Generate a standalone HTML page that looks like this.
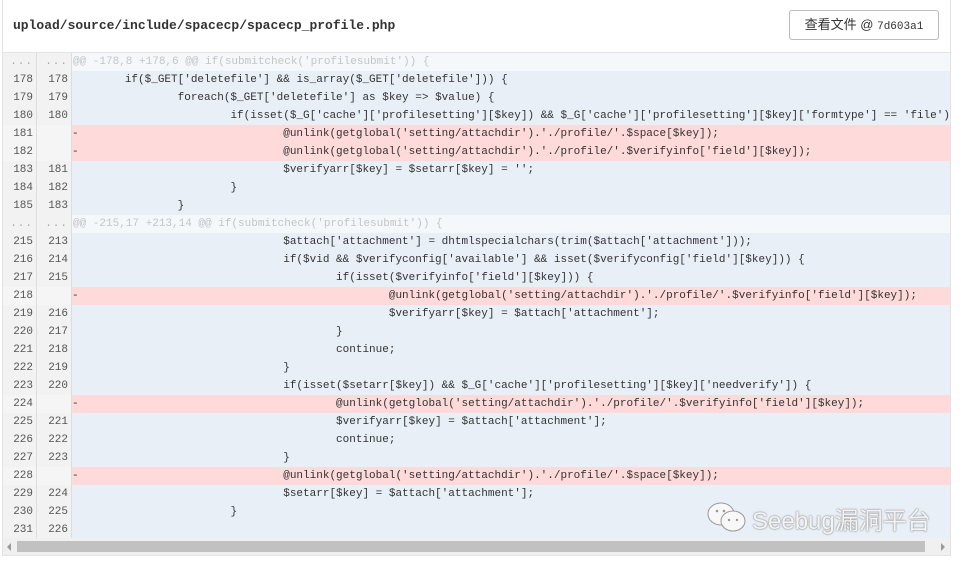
<!DOCTYPE html>
<html><head><meta charset="utf-8"><style>
body{margin:0;background:#fff;width:964px;height:562px;overflow:hidden;font-family:"Liberation Mono",monospace;}
.box{position:absolute;left:2px;top:0;width:949px;height:556px;border:1px solid #e3e3e3;border-top:none;box-sizing:border-box;overflow:hidden}
.hdr{height:52px;border-bottom:1px solid #e3e3e3;background:#fff;position:relative}
.hdr .p{position:absolute;left:10px;top:18px;font-size:13px;font-weight:bold;color:#333}
.btn{position:absolute;left:786px;top:10px;width:150px;height:30px;border:1px solid #bbb;border-radius:3px;box-sizing:border-box;font-family:"Liberation Sans","Noto Sans CJK SC",sans-serif;font-size:13px;color:#333;line-height:28px;text-align:center}
.btn span{font-family:"Liberation Mono",monospace;font-size:11px}
.r{height:18px;line-height:18px;font-size:11px;display:flex;white-space:pre;color:#333}
.n{width:34px;flex:none;text-align:right;padding-right:3px;box-sizing:border-box;background:#f2f2f2;border-right:1px solid #ddd;color:#555}
.n2{width:35px}
.c{flex:1;padding-left:0;background:#e8eff7;tab-size:8}
.d .c{background:#ffdada}
.d .n{background:#f5f5f5}
.h .c{background:#f5f8fb;color:#c4c4c4;padding-left:1px}
.h .n{color:#aaa;letter-spacing:1px}
.sb{position:absolute;left:0;top:538px;width:947px;height:17px;background:#f0f0f0}
.th{position:absolute;left:14px;top:3px;width:908px;height:11px;background:#c1c1c1}
.ar{position:absolute;top:5px;width:0;height:0;border-top:4px solid transparent;border-bottom:4px solid transparent}
.wm{position:absolute;left:752px;top:501px;font-family:"Liberation Sans","Noto Sans CJK SC",sans-serif;font-size:24px;color:#f4f4f4;text-shadow:0 0 1px #777,0 0 2px #999}
</style></head><body>
<div class="box">
<div class="hdr"><div class="p">upload/source/include/spacecp/spacecp_profile.php</div><div class="btn">查看文件 @ <span>7d603a1</span></div></div>
<div class="r h"><div class="n">...</div><div class="n n2">...</div><div class="c">@@ -178,8 +178,6 @@ if(submitcheck('profilesubmit')) {</div></div>
<div class="r"><div class="n">178</div><div class="n n2">178</div><div class="c"> 	if($_GET['deletefile'] &amp;&amp; is_array($_GET['deletefile'])) {</div></div>
<div class="r"><div class="n">179</div><div class="n n2">179</div><div class="c"> 		foreach($_GET['deletefile'] as $key =&gt; $value) {</div></div>
<div class="r"><div class="n">180</div><div class="n n2">180</div><div class="c"> 			if(isset($_G['cache']['profilesetting'][$key]) &amp;&amp; $_G['cache']['profilesetting'][$key]['formtype'] == 'file') {</div></div>
<div class="r d"><div class="n">181</div><div class="n n2"></div><div class="c">-				@unlink(getglobal('setting/attachdir').'./profile/'.$space[$key]);</div></div>
<div class="r d"><div class="n">182</div><div class="n n2"></div><div class="c">-				@unlink(getglobal('setting/attachdir').'./profile/'.$verifyinfo['field'][$key]);</div></div>
<div class="r"><div class="n">183</div><div class="n n2">181</div><div class="c"> 				$verifyarr[$key] = $setarr[$key] = '';</div></div>
<div class="r"><div class="n">184</div><div class="n n2">182</div><div class="c"> 			}</div></div>
<div class="r"><div class="n">185</div><div class="n n2">183</div><div class="c"> 		}</div></div>
<div class="r h"><div class="n">...</div><div class="n n2">...</div><div class="c">@@ -215,17 +213,14 @@ if(submitcheck('profilesubmit')) {</div></div>
<div class="r"><div class="n">215</div><div class="n n2">213</div><div class="c"> 				$attach['attachment'] = dhtmlspecialchars(trim($attach['attachment']));</div></div>
<div class="r"><div class="n">216</div><div class="n n2">214</div><div class="c"> 				if($vid &amp;&amp; $verifyconfig['available'] &amp;&amp; isset($verifyconfig['field'][$key])) {</div></div>
<div class="r"><div class="n">217</div><div class="n n2">215</div><div class="c"> 					if(isset($verifyinfo['field'][$key])) {</div></div>
<div class="r d"><div class="n">218</div><div class="n n2"></div><div class="c">-						@unlink(getglobal('setting/attachdir').'./profile/'.$verifyinfo['field'][$key]);</div></div>
<div class="r"><div class="n">219</div><div class="n n2">216</div><div class="c"> 						$verifyarr[$key] = $attach['attachment'];</div></div>
<div class="r"><div class="n">220</div><div class="n n2">217</div><div class="c"> 					}</div></div>
<div class="r"><div class="n">221</div><div class="n n2">218</div><div class="c"> 					continue;</div></div>
<div class="r"><div class="n">222</div><div class="n n2">219</div><div class="c"> 				}</div></div>
<div class="r"><div class="n">223</div><div class="n n2">220</div><div class="c"> 				if(isset($setarr[$key]) &amp;&amp; $_G['cache']['profilesetting'][$key]['needverify']) {</div></div>
<div class="r d"><div class="n">224</div><div class="n n2"></div><div class="c">-					@unlink(getglobal('setting/attachdir').'./profile/'.$verifyinfo['field'][$key]);</div></div>
<div class="r"><div class="n">225</div><div class="n n2">221</div><div class="c"> 					$verifyarr[$key] = $attach['attachment'];</div></div>
<div class="r"><div class="n">226</div><div class="n n2">222</div><div class="c"> 					continue;</div></div>
<div class="r"><div class="n">227</div><div class="n n2">223</div><div class="c"> 				}</div></div>
<div class="r d"><div class="n">228</div><div class="n n2"></div><div class="c">-				@unlink(getglobal('setting/attachdir').'./profile/'.$space[$key]);</div></div>
<div class="r"><div class="n">229</div><div class="n n2">224</div><div class="c"> 				$setarr[$key] = $attach['attachment'];</div></div>
<div class="r"><div class="n">230</div><div class="n n2">225</div><div class="c"> 			}</div></div>
<div class="r"><div class="n">231</div><div class="n n2">226</div><div class="c"> </div></div>
<div class="sb"><div class="ar" style="left:4px;border-right:4px solid #999"></div><div class="th"></div><div class="ar" style="left:938px;border-left:4px solid #999"></div></div>
</div>
<svg style="position:absolute;left:705px;top:500px" width="44" height="34" viewBox="0 0 44 34"><ellipse cx="16" cy="14" rx="13" ry="11" fill="#f8f8f8" stroke="#999"/><ellipse cx="28" cy="21" rx="12" ry="10" fill="#f8f8f8" stroke="#999"/><circle cx="12" cy="11" r="1.3" fill="#999"/><circle cx="19" cy="11" r="1.3" fill="#999"/><circle cx="24" cy="20" r="1.2" fill="#999"/><circle cx="32" cy="20" r="1.2" fill="#999"/></svg>
<div class="wm">Seebug漏洞平台</div>
</body></html>
